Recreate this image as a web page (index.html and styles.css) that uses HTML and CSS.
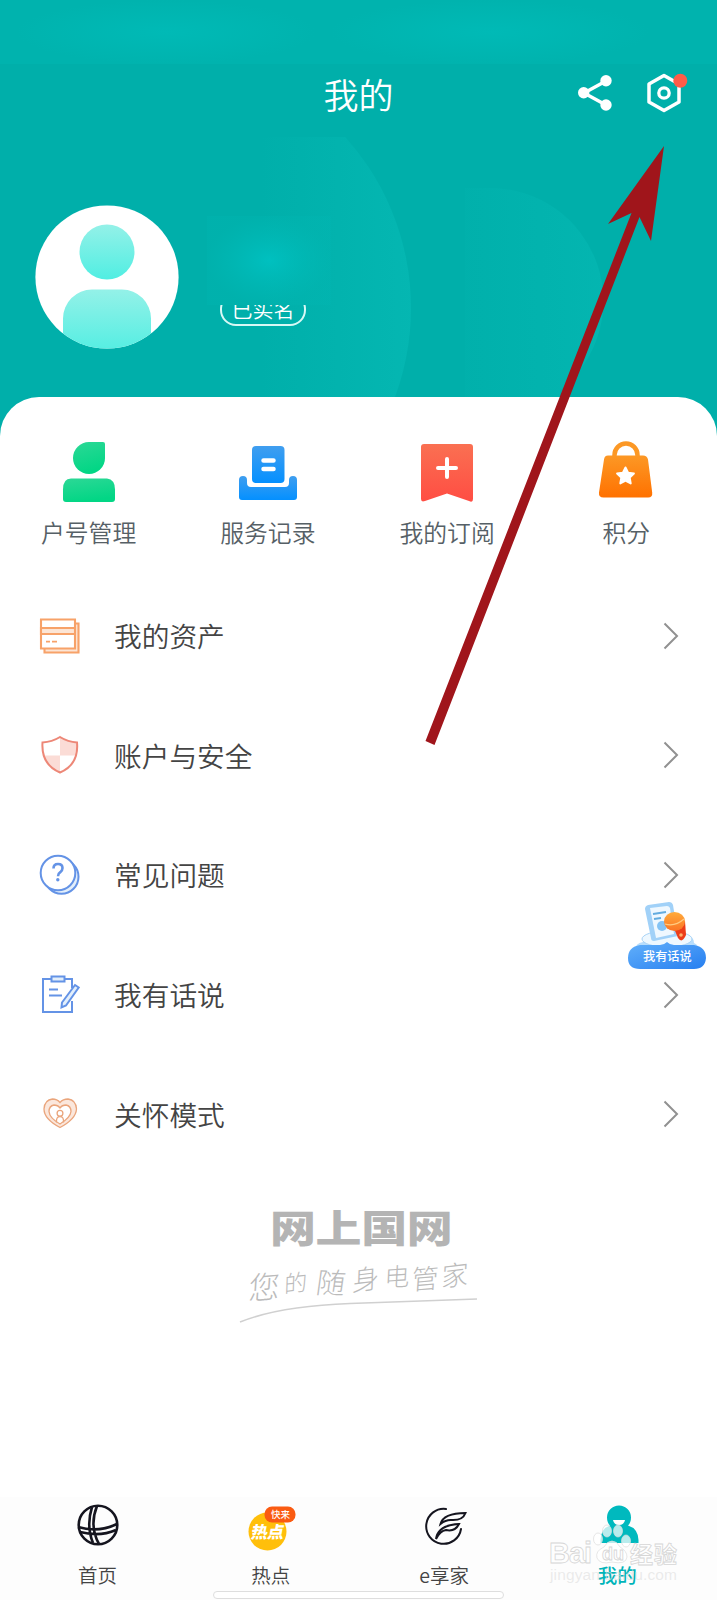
FILE: index.html
```html
<!DOCTYPE html>
<html lang="zh-CN">
<head>
<meta charset="utf-8">
<title>我的</title>
<link rel="stylesheet" href="styles.css">
</head>
<body>
<div class="screen">
  <header class="hero">
    <svg class="hero-art" viewBox="0 0 717 440" aria-hidden="true">
      <defs>
        <linearGradient id="disc1" gradientUnits="userSpaceOnUse" x1="260" y1="0" x2="411" y2="0"><stop offset="0" stop-color="#06bdb8" stop-opacity="0"/><stop offset="1" stop-color="#08bdb8" stop-opacity=".55"/></linearGradient>
        <linearGradient id="disc2" gradientUnits="userSpaceOnUse" x1="460" y1="0" x2="603" y2="0"><stop offset="0" stop-color="#06bdb8" stop-opacity=".08"/><stop offset="1" stop-color="#08bdb8" stop-opacity=".45"/></linearGradient>
        <radialGradient id="haze"><stop offset="0" stop-color="#00c2c2" stop-opacity=".9"/><stop offset="1" stop-color="#00b8b4" stop-opacity=".25"/></radialGradient>
        <radialGradient id="glow"><stop offset="0" stop-color="#00bab6"/><stop offset="1" stop-color="#00bab6" stop-opacity="0"/></radialGradient>
        <clipPath id="discClip"><rect x="220" y="137" width="420" height="303"/></clipPath>
      </defs>
      <g clip-path="url(#discClip)">
        <circle cx="156" cy="308" r="255" fill="url(#disc1)"/>
        <path d="M465 188h25a113 113 0 0 1 70 202v50h-95z" fill="url(#disc2)"/>
      </g>
      <path d="M0 0h717v64H0z" fill="#00b3ae"/>
      <path d="M16 0h300v64H16z" fill="url(#glow)"/>
      <path d="M330 0h320v64H330z" fill="url(#glow)"/>
      <path d="M207 216h124v89H207z" fill="url(#haze)"/>
    </svg>
    <div class="titlebar">
      <span></span>
      <h1 class="title">我的</h1>
      <div class="actions">
        <svg width="36" height="38" viewBox="0 0 36 38"><path d="M28 7 6 19l22 12" fill="none" stroke="#fff" stroke-width="3.4"/><g fill="#fff"><circle cx="28" cy="6.8" r="5.7"/><circle cx="5.7" cy="18.7" r="5.7"/><circle cx="28" cy="31" r="5.7"/></g></svg>
        <svg class="gear" width="42" height="42" viewBox="0 0 42 42"><path d="M17 3.500 32 12v18l-15 8.500L2 30V12z" fill="none" stroke="#fff" stroke-width="3.500" stroke-linejoin="round"/><circle cx="17" cy="21" r="5.200" fill="none" stroke="#fff" stroke-width="3.300"/><circle cx="33.300" cy="8.800" r="7" fill="#ff5c48"/></svg>
      </div>
    </div>
    <div class="profile">
      <svg class="avatar" width="144" height="144" viewBox="0 0 144 144">
        <defs><linearGradient id="skin" x1="0" y1="0" x2="0" y2="1"><stop offset="0" stop-color="#94f1e8"/><stop offset="1" stop-color="#50eee2"/></linearGradient><clipPath id="round"><circle cx="72" cy="72" r="71.600"/></clipPath></defs>
        <circle cx="72" cy="72" r="71.600" fill="#fff"/>
        <circle cx="72" cy="47" r="27.500" fill="url(#skin)"/>
        <path d="M28 150v-36.500a29 29 0 0 1 29-29h30a29 29 0 0 1 29 29V150z" fill="url(#skin)" clip-path="url(#round)"/>
      </svg>
      <div class="tag-window"><span class="tag">已实名</span></div>
    </div>
  </header>

  <main class="sheet">
    <nav class="shortcuts">
      <a class="shortcut">
        <svg width="64" height="70" viewBox="0 0 64 70"><defs><linearGradient id="gr" x1="0" y1="0" x2=".3" y2="1"><stop offset="0" stop-color="#2cd896"/><stop offset="1" stop-color="#02d685"/></linearGradient></defs><path d="M32 7h14q2 0 2 2v14a16 16 0 1 1-16-16z" fill="url(#gr)"/><path d="M14 43.500h36q8 1 8 11V64q0 3-3 3H9q-3 0-3-3v-9.500q0-11 8-11z" fill="url(#gr)"/></svg>
        <span>户号管理</span>
      </a>
      <a class="shortcut">
        <svg width="64" height="70" viewBox="0 0 64 70"><defs><linearGradient id="bl" x1="0" y1="0" x2="0" y2="1"><stop offset="0" stop-color="#409eef"/><stop offset="1" stop-color="#0490ff"/></linearGradient></defs><rect x="16" y="11" width="32.500" height="37" rx="4" fill="url(#bl)"/><path d="M3 45q0-4 4-4t4 4v3q0 4 4 4h34q4 0 4-4v-3q0-4 4-4t4 4v17q0 3-3 3H6q-3 0-3-3z" fill="url(#bl)"/><path d="M27.500 25.500h10M27.500 34h10" stroke="#fff" stroke-width="4.500" stroke-linecap="round"/></svg>
        <span>服务记录</span>
      </a>
      <a class="shortcut">
        <svg width="64" height="70" viewBox="0 0 64 70"><defs><linearGradient id="rd" x1="0" y1="0" x2="0" y2="1"><stop offset="0" stop-color="#fa7052"/><stop offset="1" stop-color="#ff4d43"/></linearGradient></defs><path d="M9 9h46q3 0 3 3v52q0 4-4 2L32 58.500 10 66q-4 1.500-4-2V12q0-3 3-3z" fill="url(#rd)"/><path d="M32 24v18M23 33h18" stroke="#fff" stroke-width="4" stroke-linecap="round"/></svg>
        <span>我的订阅</span>
      </a>
      <a class="shortcut">
        <svg width="64" height="70" viewBox="0 0 64 70"><defs><linearGradient id="or" x1="0" y1="0" x2="0" y2="1"><stop offset="0" stop-color="#fc9825"/><stop offset="1" stop-color="#ff7100"/></linearGradient></defs><path d="M20.500 22v-2a11.500 11.500 0 0 1 23 0v2" fill="none" stroke="#fc9825" stroke-width="4.500"/><path d="M14 20.500h35q4 0 5 4l4.200 33q.5 5-4 5H9.500q-5 0-4.500-5l5-33q.5-4 4-4z" fill="url(#or)"/><path d="m31.500 32.500 2.600 5.200 5.800.8-4.200 4.100 1 5.800-5.200-2.700-5.200 2.700 1-5.800-4.200-4.100 5.800-.8z" fill="#fff" stroke="#fff" stroke-width="2" stroke-linejoin="round"/></svg>
        <span>积分</span>
      </a>
    </nav>

    <div class="menu">
      <a class="row">
        <svg width="44" height="44" viewBox="0 0 44 44"><g fill="#fff" stroke="#f7a269" stroke-width="2.100"><path d="M5.500 9.500h34v29h-34z" fill="#fce5d5"/><path d="M2 5.500h34v29H2z"/><path d="M2 14h34v6H2z" fill="#fce5d5"/></g><path d="M7 27.700h4M13 27.700h5" stroke="#f7a269" stroke-width="1.800"/></svg>
        <span>我的资产</span>
        <svg class="chevron" width="16" height="28" viewBox="0 0 16 28"><path d="m1.500 1.500 12.500 12.500L1.500 26.500"/></svg>
      </a>
      <a class="row">
        <svg width="44" height="44" viewBox="0 0 44 44"><path d="M21 4v18.500h16q2-6 1-13Q28 9 21 4zM21 22.500v17Q9 35 5 22.500z" fill="#fbdcd6"/><path d="M21 4q8 5 17 5.500 2 22-17 30Q2 31.500 3.500 9.500 13 9 21 4z" fill="none" stroke="#ed8777" stroke-width="2"/></svg>
        <span>账户与安全</span>
        <svg class="chevron" width="16" height="28" viewBox="0 0 16 28"><path d="m1.500 1.500 12.500 12.500L1.500 26.500"/></svg>
      </a>
      <a class="row">
        <svg width="44" height="44" viewBox="0 0 44 44"><g stroke="#6493e6" stroke-width="2"><circle cx="22.500" cy="23.800" r="17" fill="#e3effb"/><circle cx="19" cy="20" r="17.300" fill="#fff"/><path d="M14.500 15.500q0-4.500 4.500-4.500t4.500 4q0 2.500-2.200 4.200-2.300 1.500-2.300 4" fill="none" stroke-width="2.600"/></g><circle cx="18.800" cy="26.800" r="1.700" fill="#6493e6"/></svg>
        <span>常见问题</span>
        <svg class="chevron" width="16" height="28" viewBox="0 0 16 28"><path d="m1.500 1.500 12.500 12.500L1.500 26.500"/></svg>
      </a>
      <a class="row">
        <svg width="44" height="44" viewBox="0 0 44 44"><g fill="none" stroke="#6493e6" stroke-width="2"><path d="M12 6H4v33h29V28M26 6h7v9"/><path d="M12.500 3.500h13v5h-13z" fill="#e3effb"/><path d="M10 16.500h9M10 22.500h13"/><path d="m36 12 3.700 2.500L27 32.500l-4.500 2 .5-5z" fill="#e3effb"/></g></svg>
        <span>我有话说</span>
        <svg class="chevron" width="16" height="28" viewBox="0 0 16 28"><path d="m1.500 1.500 12.500 12.500L1.500 26.500"/></svg>
      </a>
      <a class="row">
        <svg width="44" height="44" viewBox="0 0 44 44"><g stroke="#eaa57c" stroke-width="1.300"><path d="M21 10.500q3-3.500 8-3.500 8 1 8.500 10-.5 10-16.500 18.500Q5 27 5 17 5.500 8 13.500 7q4.500 0 7.500 3.500z" fill="#fbe7dc"/><path d="M21 16q2-3 6-3 5 1 5 6.500-.5 6-11 12.500Q10.500 26 10 19.500 10 14 15 13q4 0 6 3z" fill="#fff"/><path d="M17.500 30.500q-.5-6 3.500-6t3.500 6" fill="none"/><circle cx="21" cy="21.300" r="2.900" fill="#fff"/></g></svg>
        <span>关怀模式</span>
        <svg class="chevron" width="16" height="28" viewBox="0 0 16 28"><path d="m1.500 1.500 12.500 12.500L1.500 26.500"/></svg>
      </a>
    </div>

    <svg class="brand" width="240" height="116" viewBox="236 1208 240 116">
      <text class="brand-name" transform="translate(270 1243) scale(1.210 1)" textLength="151">网上国网</text>
      <g class="script">
        <text transform="translate(248 1301) rotate(-5) skewX(-9)" font-size="31">您</text>
        <text transform="translate(284 1294) rotate(-7) skewX(-9)" font-size="23">的</text>
        <text transform="translate(315 1294) rotate(2) skewX(-6)" font-size="29">随</text>
        <text transform="translate(352 1292) rotate(-7) skewX(-9)" font-size="27">身</text>
        <text transform="translate(384 1288) rotate(-4) skewX(-7)" font-size="25">电</text>
        <text transform="translate(411 1291) rotate(-5) skewX(-9)" font-size="27">管</text>
        <text transform="translate(441 1288) rotate(-7) skewX(-10)" font-size="27">家</text>
      </g>
      <path d="M240 1323Q280 1307 350 1304.500T477 1300" fill="none" stroke="#d0d0d0" stroke-width="1.600"/>
    </svg>
  </main>

  <nav class="tabs">
    <a class="tab">
      <svg width="48" height="48" viewBox="0 0 48 48"><g fill="none" stroke="#15151f" stroke-width="2.600"><circle cx="24" cy="24" r="19.300"/><path d="M18 6Q12 25 19 42M23 5q-8 20 2 38M4 26q20 6 39-3M6 31q20 5 36-2"/></g></svg>
      <span>首页</span>
    </a>
    <a class="tab">
      <svg class="hot" width="48" height="48" viewBox="0 0 48 48"><circle cx="20.500" cy="30.500" r="19" fill="#ffbf0b"/><text x="3.500" y="37.500" font-size="16.500" font-weight="900" transform="translate(6.500) skewX(-10)">热点</text><rect x="17.500" y="5.500" width="31" height="16" rx="7.500" fill="#fa5b12"/><text x="24" y="16.800" font-size="9.500" font-weight="500">快来</text></svg>
      <span>热点</span>
    </a>
    <a class="tab">
      <svg width="48" height="48" viewBox="0 0 48 48"><g fill="none" stroke="#15151f" stroke-width="2" stroke-linecap="round"><path d="M26 8A17.500 17.500 0 1 0 41 28"/><path d="M20.500 23q3-11 25-11-3 8-15 7-5 0-10 4z"/><path d="M16 38q2-14 23-15-4 8-13 6-6 1-10 9z"/></g></svg>
      <span>e享家</span>
    </a>
    <a class="tab active">
      <svg width="48" height="48" viewBox="0 0 48 48"><path d="M14 16.500a12 12 0 0 1 24 0q0 5-3 8 10 3 10.500 14.500v3h-38v-3Q8 27.500 17 24.500q-3-3-3-8z" fill="#00b9be"/><path d="M20 19h12q-1 5-6 5t-6-5z" fill="#fff"/></svg>
      <span>我的</span>
    </a>
  </nav>
  <div class="home-indicator"></div>

  <a class="feedback">
    <svg width="80" height="70" viewBox="0 0 80 70">
      <defs><linearGradient id="pill" x1="0" y1="0" x2="1" y2="1"><stop offset="0" stop-color="#62b0fb"/><stop offset="1" stop-color="#277ff0"/></linearGradient><linearGradient id="mic" x1="0" y1="0" x2="0" y2="1"><stop offset="0" stop-color="#ffac3c"/><stop offset="1" stop-color="#fb7424"/></linearGradient></defs>
      <path d="M8 50q0-8 8-9 2-5 9-7h33q9 1 9 8 5 2 5 8z" fill="#b7ddfc"/>
      <ellipse cx="40" cy="38" rx="25" ry="8" fill="#eef8ff" stroke="#a8d3f6"/>
      <path d="m21 4 21-3q3 0 4 3l5 31-24 5q-3 0-3-3L18 8q0-3 3-4z" fill="#a1d1f8"/><path d="m23 7 17-2q2 0 3 2l4 26-18 4z" fill="#eff8ff"/><path d="m26 13 13-2M27 18l7-1" stroke="#64acdf" stroke-width="2"/><circle cx="35" cy="25" r="5" fill="#84c3f5"/>
      <path d="m46 25 12-5 1 14q-4 9-8 3z" fill="#ec3d19"/><circle cx="54" cy="34" r="1.800" fill="#ffb06a"/><ellipse cx="47.500" cy="20.500" rx="10.500" ry="9.500" fill="url(#mic)"/><path d="M38 23q10 3 19-5" fill="none" stroke="#ffcb80" stroke-width="1.200"/>
      <path d="M13 44h20q4 0 7-3 3 3 7 3h20q12 2 12 13-1 11-12 11H13Q1 68 1 57q0-11 12-13z" fill="url(#pill)"/>
      <text x="16" y="60">我有话说</text>
    </svg>
  </a>
  <svg class="pointer" width="717" height="1600" viewBox="0 0 717 1600" aria-hidden="true"><path d="M664 146 608 224l23.500-11L425.500 741l9 4L639.500 217 651 241z" fill="#a0151b"/></svg>
  <svg class="watermark" width="140" height="90" viewBox="545 1510 140 90">
    <g fill="#fff" fill-opacity=".72" stroke="#dcdcdc" stroke-width=".7"><ellipse cx="598" cy="1539" rx="4.500" ry="6"/><ellipse cx="607" cy="1531" rx="4.500" ry="6"/><ellipse cx="618" cy="1531" rx="4.500" ry="6"/><ellipse cx="626" cy="1541" rx="4.500" ry="6"/><path d="M612 1541q-5 0-8 6-9 4-7 11 3 7 15 4 14 3 15-5 0-6-7-10-3-6-8-6z"/></g>
    <text x="549" y="1563" font-size="29" textLength="43">Bai</text><text x="602" y="1560" font-size="18">du</text><text x="630" y="1563" font-size="23" textLength="47">经验</text>
    <text class="url" x="550" y="1580" font-size="15.500" textLength="127">jingyan.baidu.com</text>
  </svg>
</div>
</body>
</html>
```
FILE: styles.css
```css
* { box-sizing: border-box; }
body { margin: 0; background: #fff; font-family: "Noto Sans CJK SC", sans-serif; }
svg { display: block; flex: none; overflow: visible; }
.screen { position: relative; width: 717px; height: 1600px; overflow: hidden; display: flex; flex-direction: column; }

.hero { position: relative; height: 440px; flex: none; background: #00afaa; padding-top: 64px; color: #fff; }
.hero-art { position: absolute; inset: 0; width: 717px; height: 440px; }
.titlebar { position: relative; display: grid; grid-template-columns: 1fr auto 1fr; align-items: center; height: 60px; }
.title { margin: 0; font-size: 35px; font-weight: 350; line-height: 60px; }
.actions { display: flex; justify-content: flex-end; align-items: center; gap: 33px; padding: 0 28px 2px 0; }
.profile { position: relative; display: flex; align-items: flex-start; gap: 41px; padding: 81px 0 0 35px; }
.tag-window { margin-top: 100px; height: 22px; overflow: hidden; display: flex; align-items: flex-end; }
.tag { flex: none; display: block; width: 86px; height: 33px; border: 2px solid #d8f8f5; border-radius: 16px; font-size: 21px; font-weight: 350; line-height: 26px; text-align: center; margin-bottom: 1px; }

.sheet { position: relative; flex: 1; margin-top: -43px; background: #fff; border-radius: 39px 39px 0 0; padding-top: 38px; display: flex; flex-direction: column; align-items: stretch; }
.shortcuts { display: grid; grid-template-columns: repeat(4, 1fr); margin-left: -1px; margin-right: 1px; }
.shortcut { display: flex; flex-direction: column; align-items: center; font-size: 23.800px; line-height: 34px; font-weight: 350; color: #566066; gap: 10px; }
.menu { display: flex; flex-direction: column; margin-top: 27px; }
.row { display: flex; align-items: center; height: 119.600px; padding: 0 38px 0 39px; font-size: 27.700px; color: #444; }
.row span { flex: 1; margin-left: 31px; font-weight: 350; line-height: 40px; padding-bottom: 1px; }
.chevron path { fill: none; stroke: #919191; stroke-width: 2; }
.brand { align-self: center; margin: 33px 0 0 -5px; }
.brand-name { font-size: 38px; font-weight: 900; fill: #b4b4b4; }
.script { fill: #bbb; font-weight: 300; }

.tabs { flex: none; height: 103px; padding: 4px 13px 0 11px; display: grid; grid-template-columns: repeat(4, 1fr); background: #fdfdfd; }
.tab { display: flex; flex-direction: column; align-items: center; gap: 12px; font-size: 19.500px; line-height: 28px; font-weight: 350; color: #444; }
.tab.active { color: #00b4b9; font-weight: 500; }
.hot text { fill: #fff; }
.home-indicator { position: absolute; left: 213px; top: 1591px; width: 291px; height: 8px; border: 1.500px solid #dedede; border-radius: 4px; background: #fff; }
.feedback { position: absolute; left: 627px; top: 901px; }
.feedback text { fill: #fff; font-size: 12.200px; font-weight: 500; }
.pointer { position: absolute; left: 0; top: 0; pointer-events: none; }
.watermark { position: absolute; left: 545px; top: 1510px; pointer-events: none; }
.watermark text { font-family: "Liberation Sans", "Noto Sans CJK SC", sans-serif; font-weight: 700; fill: #fff; fill-opacity: .75; stroke: #d6d6d6; stroke-width: .8; }
.watermark .url { font-weight: 400; fill: #ddd; fill-opacity: .6; stroke: none; }
```
